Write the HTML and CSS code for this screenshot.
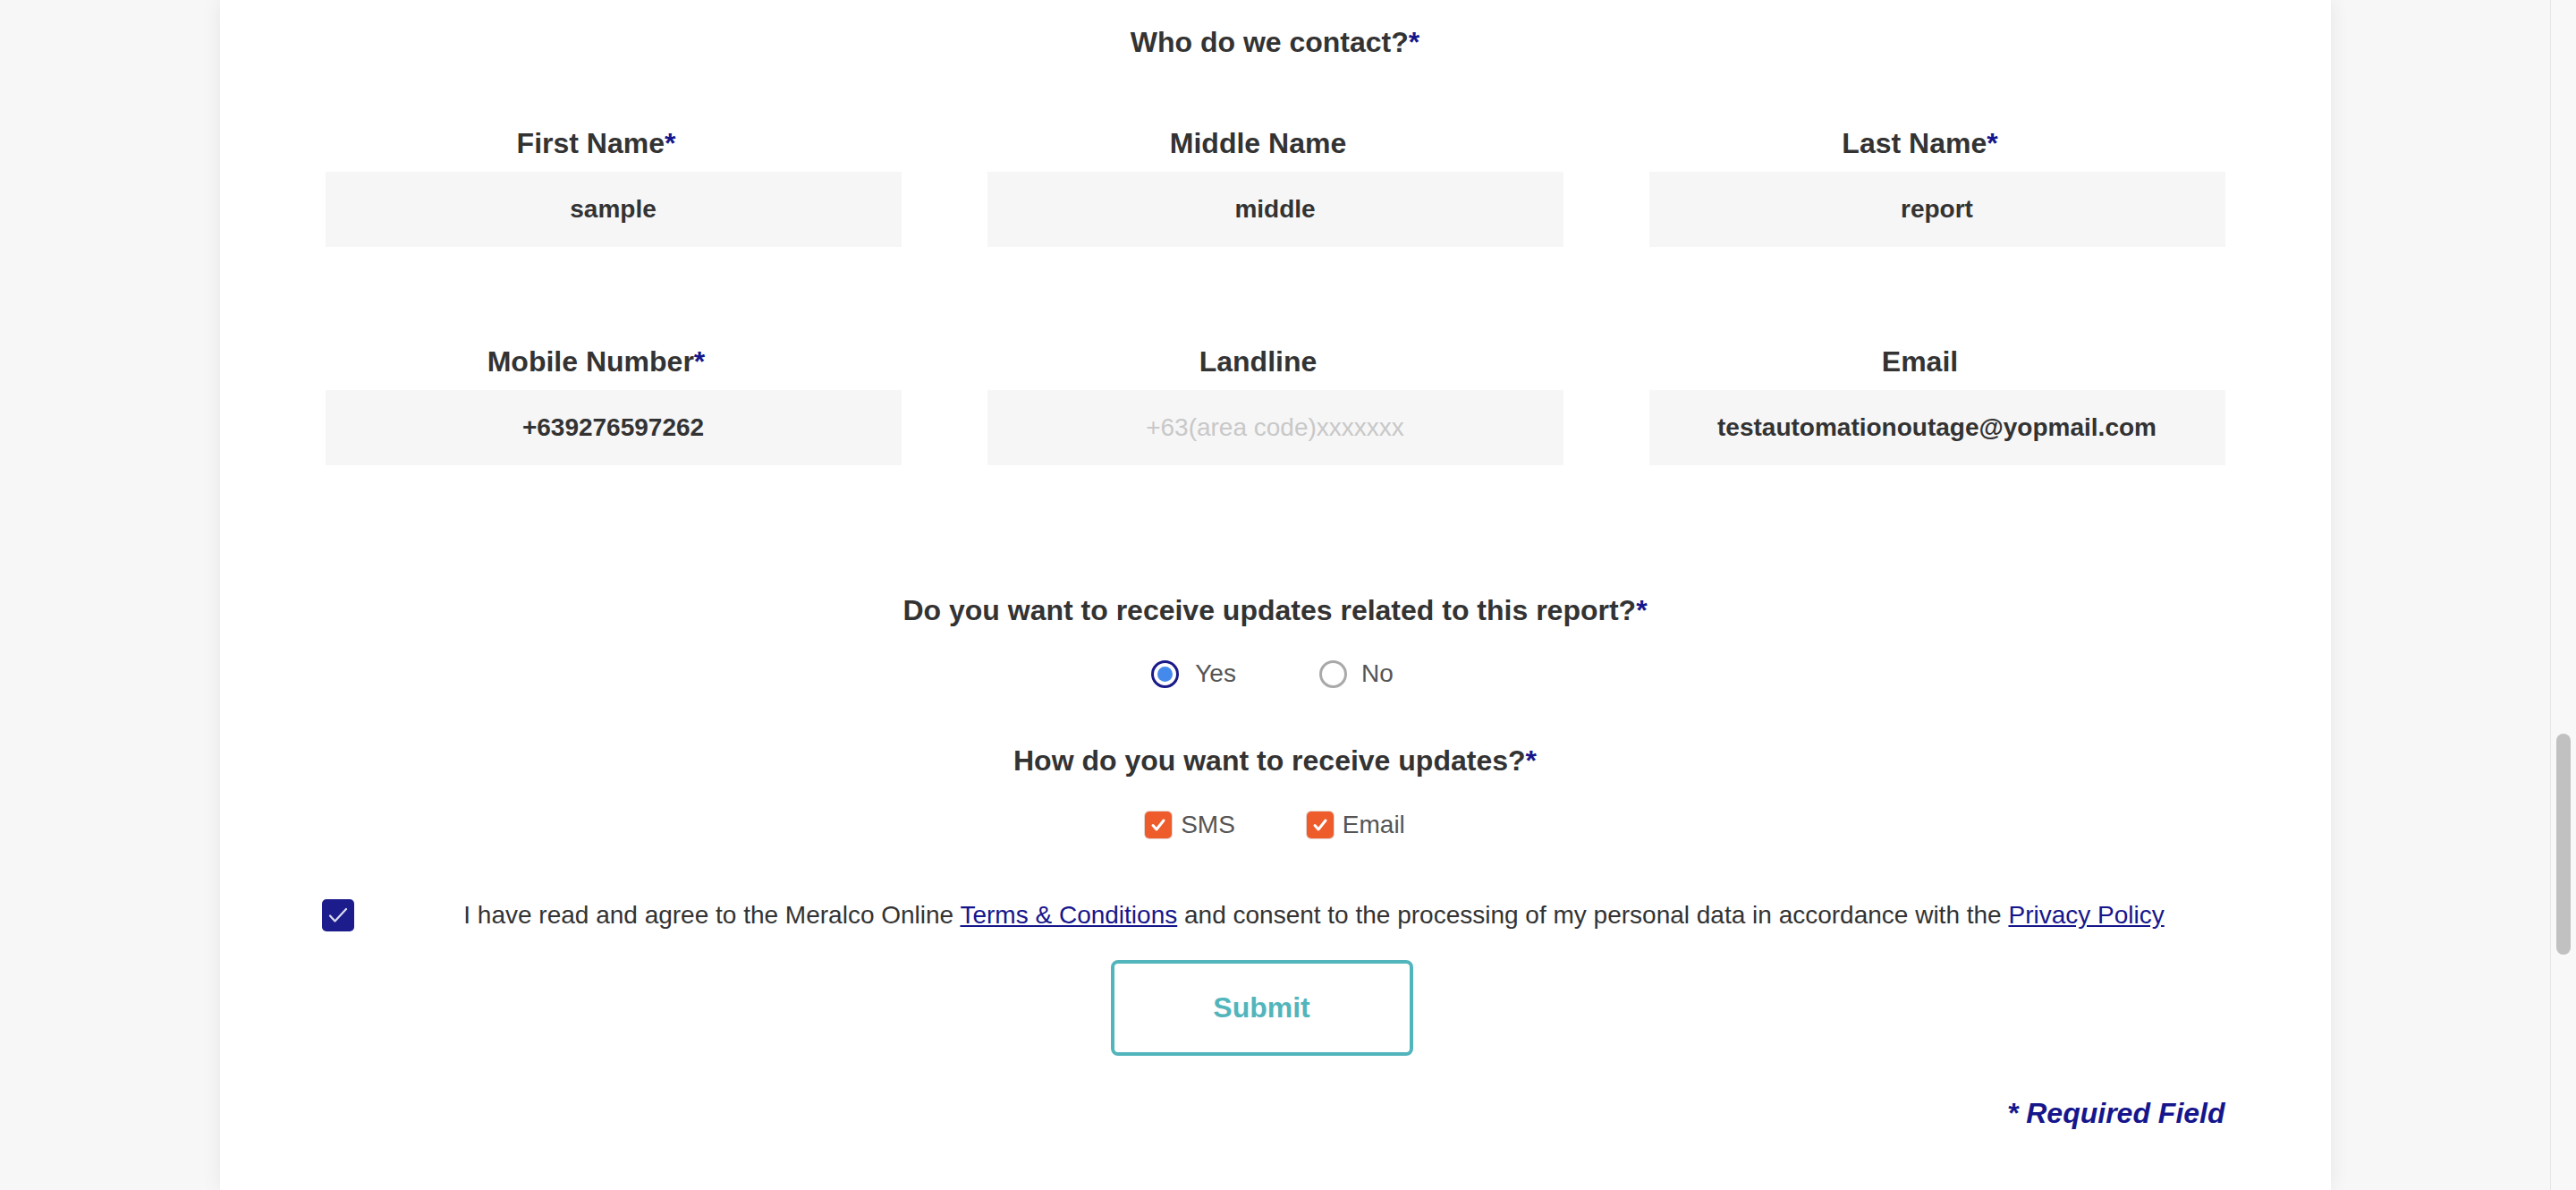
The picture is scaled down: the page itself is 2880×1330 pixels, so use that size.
FILE: index.html
```html
<!DOCTYPE html>
<html lang="en">
<head>
<meta charset="utf-8">
<title>Who do we contact?</title>
<link rel="stylesheet" href="styles.css">
</head>
<body>
<div class="page">
  <main class="viewport">
    <section class="card">
      <h2 class="section-title">Who do we contact?<span class="req">*</span></h2>

      <div class="field-grid">
        <div class="field">
          <label class="field-label">First Name<span class="req">*</span></label>
          <input class="field-input" type="text" value="sample" readonly>
        </div>
        <div class="field">
          <label class="field-label">Middle Name</label>
          <input class="field-input" type="text" value="middle" readonly>
        </div>
        <div class="field">
          <label class="field-label">Last Name<span class="req">*</span></label>
          <input class="field-input" type="text" value="report" readonly>
        </div>
        <div class="field">
          <label class="field-label">Mobile Number<span class="req">*</span></label>
          <input class="field-input" type="text" value="+639276597262" readonly>
        </div>
        <div class="field">
          <label class="field-label">Landline</label>
          <input class="field-input" type="text" placeholder="+63(area code)xxxxxxx" readonly>
        </div>
        <div class="field">
          <label class="field-label">Email</label>
          <input class="field-input" type="text" value="testautomationoutage@yopmail.com" readonly>
        </div>
      </div>

      <h3 class="question q-updates">Do you want to receive updates related to this report?<span class="req">*</span></h3>
      <div class="choice-row radio-row">
        <div class="choice choice-yes">
          <span class="radio radio-on"><span class="radio-dot"></span></span>
          <span class="choice-text">Yes</span>
        </div>
        <div class="choice">
          <span class="radio"></span>
          <span class="choice-text">No</span>
        </div>
      </div>

      <h3 class="question q-how">How do you want to receive updates?<span class="req">*</span></h3>
      <div class="choice-row check-row">
        <div class="choice choice-sms">
          <span class="check-box">
            <svg viewBox="0 0 30 30" width="30" height="30"><path d="M9 15.5 L13 20 L21 10" fill="none" stroke="#ffffff" stroke-width="3" stroke-linecap="round" stroke-linejoin="round"/></svg>
          </span>
          <span class="choice-text">SMS</span>
        </div>
        <div class="choice">
          <span class="check-box">
            <svg viewBox="0 0 30 30" width="30" height="30"><path d="M9 15.5 L13 20 L21 10" fill="none" stroke="#ffffff" stroke-width="3" stroke-linecap="round" stroke-linejoin="round"/></svg>
          </span>
          <span class="choice-text">Email</span>
        </div>
      </div>

      <div class="consent">
        <span class="consent-box">
          <svg viewBox="0 0 36 36" width="36" height="36"><path d="M9 18.5 L14.5 24.5 L27 11" fill="none" stroke="#dcdcf0" stroke-width="2.2" stroke-linecap="round" stroke-linejoin="round"/></svg>
        </span>
        <p class="consent-text">I have read and agree to the Meralco Online <a href="#" class="link">Terms &amp; Conditions</a> and consent to the processing of my personal data in accordance with the <a href="#" class="link">Privacy Policy</a></p>
      </div>

      <div class="actions">
        <button class="submit-btn" type="button">Submit</button>
      </div>

      <p class="required-note">* Required Field</p>
    </section>
  </main>
  <div class="scrollbar"><div class="scroll-thumb"></div></div>
</div>
</body>
</html>
```
FILE: styles.css
```css
html, body {
  margin: 0;
  padding: 0;
  height: 100%;
  overflow: hidden;
}

body {
  background: #f7f7f7;
  font-family: "Liberation Sans", Arial, Helvetica, sans-serif;
  color: #333333;
}

.page {
  display: flex;
  height: 1330px;
}

.viewport {
  flex: 1;
  display: flex;
  justify-content: center;
  height: 1330px;
  overflow: hidden;
}

.card {
  width: 2360px;
  box-sizing: border-box;
  background: #ffffff;
  box-shadow: 0 0 22px rgba(0, 0, 0, 0.07);
  padding: 29px 118px 0 118px;
  min-height: 1330px;
}

.req {
  color: #16168c;
}

.section-title {
  margin: 0;
  font-size: 32px;
  line-height: 36px;
  font-weight: bold;
  text-align: center;
  color: #333333;
}

.field-grid {
  margin-top: 77px;
  display: grid;
  grid-template-columns: repeat(3, 644px);
  column-gap: 96px;
  row-gap: 110px;
}

.field {
  display: flex;
  flex-direction: column;
}

.field-label {
  display: block;
  font-size: 32px;
  line-height: 36px;
  font-weight: bold;
  text-align: center;
  color: #333333;
  margin-bottom: 14px;
  padding-right: 38px;
}

.field-input {
  display: block;
  width: 100%;
  height: 84px;
  box-sizing: border-box;
  border: none;
  outline: none;
  background: #f6f6f6;
  font-family: "Liberation Sans", Arial, Helvetica, sans-serif;
  font-size: 28px;
  font-weight: bold;
  color: #333333;
  text-align: center;
  padding: 0;
  margin: 0;
}

.field-input::placeholder {
  color: #c8c8c8;
  font-weight: normal;
  opacity: 1;
}

.question {
  margin: 0;
  font-size: 32px;
  line-height: 36px;
  font-weight: bold;
  text-align: center;
  color: #333333;
}

.q-updates {
  margin-top: 144px;
}

.q-how {
  margin-top: 63px;
}

.choice-row {
  display: flex;
  justify-content: center;
  height: 32px;
}

.radio-row {
  margin-top: 37px;
  gap: 93px;
  padding-right: 6px;
}

.check-row {
  margin-top: 38px;
  gap: 80px;
}

.choice {
  display: flex;
  align-items: center;
}

.choice-text {
  font-size: 28px;
  line-height: 32px;
  color: #555555;
}

.radio {
  width: 31px;
  height: 31px;
  box-sizing: border-box;
  border-radius: 50%;
  border: 3px solid #a9a9a9;
  background: #ffffff;
  margin-right: 16px;
  display: flex;
  align-items: center;
  justify-content: center;
}

.radio-on {
  border: 3px solid #1a1a8a;
  margin-right: 18px;
}

.radio-dot {
  width: 17px;
  height: 17px;
  border-radius: 50%;
  background: #448aed;
}

.check-box {
  width: 30px;
  height: 30px;
  border-radius: 5px;
  background: #ef5c2c;
  box-shadow: 0 0 0 1px #e2d6d2;
  margin-right: 10px;
  display: flex;
}

.consent {
  margin-top: 67px;
  margin-left: -4px;
  display: flex;
  align-items: center;
}

.consent-box {
  width: 36px;
  height: 36px;
  flex: none;
  border-radius: 5px;
  background: #1c1c8c;
  display: flex;
}

.consent-text {
  flex: 1;
  margin: 0 0 0 55px;
  font-size: 28px;
  line-height: 36px;
  text-align: center;
  color: #333333;
}

.link {
  color: #16168c;
  text-decoration: underline;
}

.actions {
  margin-top: 32px;
  display: flex;
  justify-content: center;
  padding-right: 30px;
}

.submit-btn {
  width: 338px;
  height: 107px;
  box-sizing: border-box;
  border: 4px solid #53b5bc;
  border-radius: 8px;
  background: #ffffff;
  color: #53b5bc;
  font-family: "Liberation Sans", Arial, Helvetica, sans-serif;
  font-size: 32px;
  font-weight: bold;
  padding: 0;
}

.required-note {
  margin: 46px 0 0 0;
  font-size: 32px;
  line-height: 36px;
  font-weight: bold;
  font-style: italic;
  text-align: right;
  color: #16168c;
}

.scrollbar {
  width: 29px;
  flex: none;
  height: 1330px;
  box-sizing: border-box;
  border-left: 1px solid #e6e6e6;
  background: #f8f8f8;
  padding: 820px 0 0 6px;
}

.scroll-thumb {
  width: 16px;
  height: 247px;
  border-radius: 8px;
  background: #c1c1c1;
}
```
